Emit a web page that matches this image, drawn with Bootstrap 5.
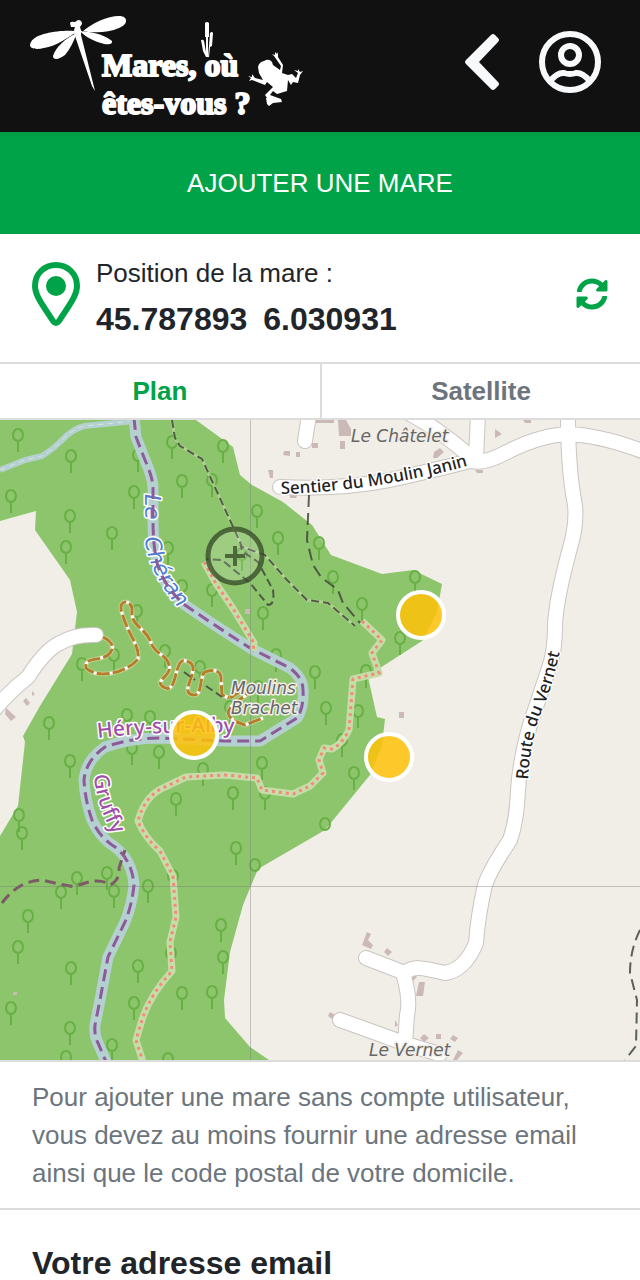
<!DOCTYPE html>
<html lang="fr">
<head>
<meta charset="utf-8">
<meta name="viewport" content="width=device-width, initial-scale=1">
<title>Mares, où êtes-vous ?</title>
<link href="https://cdn.jsdelivr.net/npm/bootstrap@5.3.0/dist/css/bootstrap.min.css" rel="stylesheet">
<style>
  :root { --green: #00a348; --line: #dcdcdc; }
  body { font-family: "Liberation Sans", Arial, sans-serif; font-size: 26px; line-height: 38px; color: #212529; }
  .top-bar { background: #111; height: 132px; padding: 0 38px 0 28px; position: relative; z-index: 1; }
  .brand-art { width: 280px; height: 112px; }
  .brand-art text { font: bold 32px "Liberation Serif", serif; fill: #fff; stroke: #fff; stroke-width: 2; stroke-linejoin: round; }
  .icon-btn { background: none; border: 0; padding: 0; display: flex; color: #f8f9fa; }
  .page-title { background: var(--green); color: #fff; font-size: 26px; line-height: 38px; padding: 32px; margin: 0; font-weight: 400; }
  .position-bar { padding: 20px 32px 16px; border-bottom: 2px solid var(--line); }
  .position-bar > svg, .position-bar > button { margin-bottom: 12px; }
  .coords { font-size: 32px; line-height: 54px; font-weight: 700; }
  .layer-tab { background: #fff; border: 0; border-bottom: 2px solid var(--line); color: #6c757d; font-weight: 700; line-height: 38px; padding: 8px; height: 56px; }
  .layer-tab.active { color: var(--green); }
  .layer-tab + .layer-tab { border-left: 2px solid var(--line); }
  .map-view { display: block; width: 100%; height: 640px; background: #f1eee8; }
  .note { padding: 16px 32px; color: #6c757d; border-top: 2px solid var(--line); border-bottom: 2px solid var(--line); margin: 0; }
  .field-title { font-size: 32px; line-height: 38px; font-weight: 700; padding: 34px 32px 0; margin: 0; }
  .lbl { font-family: "Noto Sans", sans-serif; font-size: 17px; stroke: #fff; stroke-width: 3; stroke-linejoin: round; paint-order: stroke; }
  .place { font-family: "DejaVu Sans", sans-serif; fill: #666; font-style: italic; stroke: #f1eee8; }
  .street { fill: #222; font-weight: 500; }
  .town { fill: #a04fa8; font-size: 21px; font-weight: 500; }
  .water { font-family: "DejaVu Sans", sans-serif; fill: #4f7fd0; font-size: 22px; font-style: italic; }
</style>
</head>
<body>
<header class="top-bar d-flex align-items-center justify-content-between shadow-sm">
  <a href="#" class="d-flex" aria-label="Mares, où êtes-vous ?">
    <svg class="brand-art" viewBox="28 10 280 112" fill="#fff">
      <path d="M81 33C91 23 108 16 119 16C129 16 128 25 119 28C108 33 94 33 81 31Z"/>
      <path d="M74 31C60 30 36 33 31 42C27 49 36 50 44 48C56 46 66 39 75 33Z"/>
      <path d="M82 32C92 31 106 36 112 41C113 45 106 45 101 43C94 41 86 37 82 33Z"/>
      <path d="M75 34C66 38 55 48 53 56C53 61 60 59 65 55C70 49 74 41 76 35Z"/>
      <path d="M70 23Q71 21 75 22L78 20Q82 20 82 24L80 27Q82 31 81 35L95 91L92 86L75 36Q73 31 75 27L71 27Z"/>
      <path d="M205 23Q207 21 209 23V37H208V57H206V37H205ZM210 33Q212 31 213 33L212 46L210 47L209 57L208 57L209 46ZM201 40Q203 39 204 41L206 52V57L203 51Z"/>
      <text x="102" y="76">Mares, où</text>
      <text x="102" y="114">êtes-vous ?</text>
      <path d="M258 67Q259 62 264 61Q269 58 272 62L273 65L280 70L281 66L274 56L272 54L275 55L275 52L277 54L278 52L278 57L283 65L282 73L288 75L292 74L296 78L298 73L294 70L298 71L298 69L300 72L303 71L300 75L298 83L293 82L291 85L288 80L287 91L277 94L273 91L270 95L281 99L282 102L273 103L269 106L267 104L266 98L267 98L265 95L273 87L267 82L265 85L252 80L249 81L251 78L248 76L252 77L252 74L255 78L263 80L259 73Z"/>
    </svg>
  </a>
  <nav class="d-flex align-items-center" aria-label="Compte" style="gap:38px;margin-top:-8px">
    <button class="icon-btn" type="button" aria-label="Retour">
      <svg width="38" height="64" viewBox="462 30 38 64" fill="currentColor"><path d="M491 35Q493 33 495 35L498 38Q500 40 498 42L479 62L498 82Q500 84 498 86L495 89Q493 91 491 89L466 64Q464 62 466 60Z"/></svg>
    </button>
    <button class="icon-btn" type="button" aria-label="Mon compte">
      <svg width="64" height="64" viewBox="538 30 64 64" fill="none" stroke="currentColor" stroke-width="6"><circle cx="570" cy="62" r="28"/><circle cx="570" cy="55" r="9"/><path d="M550 81Q558 72 564 73Q570 75 576 73Q582 72 590 81"/></svg>
    </button>
  </nav>
</header>

<main>
  <h1 class="page-title text-center">AJOUTER UNE MARE</h1>

  <section class="position-bar d-flex align-items-center gap-3">
    <svg class="flex-shrink-0" width="48" height="64" viewBox="0 0 48 64" fill="none"><path d="M24 3C12 3 3 12 3 24C3 34 12 45 21 59Q24 63 27 59C36 45 45 34 45 24C45 12 36 3 24 3Z" stroke="#00a348" stroke-width="6"/><circle cx="24" cy="24" r="10" fill="#00a348"/></svg>
    <div class="flex-grow-1">
      <div>Position de la mare :</div>
      <div class="coords d-flex"><span>45.787893</span><span class="ms-3">6.030931</span></div>
    </div>
    <button class="icon-btn" type="button" aria-label="Actualiser la position">
      <svg width="32" height="32" viewBox="0 0 512 512" fill="#00a348"><path d="M370.72 133.28C339.458 104.008 298.888 87.962 255.848 88c-77.458.068-144.328 53.178-162.791 126.85-1.344 5.363-6.122 9.15-11.651 9.15H24.103c-7.498 0-13.194-6.807-11.807-14.176C33.933 94.924 134.813 8 256 8c66.448 0 126.791 26.136 171.315 68.685L463.03 40.97C478.149 25.851 504 36.559 504 57.941V192c0 13.255-10.745 24-24 24H345.941c-21.382 0-32.09-25.851-16.971-40.971l41.75-41.749zM32 296h134.059c21.382 0 32.09 25.851 16.971 40.971l-41.75 41.75c31.262 29.273 71.835 45.319 114.876 45.28 77.418-.07 144.315-53.144 162.787-126.849 1.344-5.363 6.122-9.15 11.651-9.15h57.304c7.498 0 13.194 6.807 11.807 14.176C478.067 417.076 377.187 504 256 504c-66.448 0-126.791-26.136-171.315-68.685L48.97 471.03C33.851 486.149 8 475.441 8 454.059V320c0-13.255 10.745-24 24-24z"/></svg>
    </button>
  </section>

  <div class="row g-0" role="group" aria-label="Fond de carte">
    <button class="layer-tab active col-6" type="button">Plan</button>
    <button class="layer-tab col-6" type="button">Satellite</button>
  </div>

  <svg class="map-view" viewBox="0 420 640 640" preserveAspectRatio="xMidYMid slice" fill="none" role="img" aria-label="Carte des mares">
    <defs>
      <g id="tree" stroke="#68b045" stroke-width="2"><ellipse rx="5" ry="6"/><path d="M0 6V17"/></g>
      <path id="river" d="M134 418L136 437L145 460Q153 478 153 488L153 520Q153 545 157 563Q164 587 185 605L210 622L250 648L290 668Q303 678 303 690Q304 708 297 718L260 741L225 741L160 738Q130 738 105 747Q86 760 84 780Q85 800 92 820Q100 838 115 847Q132 860 134 885Q132 905 125 922L108 957L100 1000L95 1025Q94 1035 98 1043L107 1064"/>
      <path id="roads" d="M-6 710Q10 691 28 677Q45 650 60 643Q75 634 96 635M280 487Q340 490 390 480Q435 470 470 461Q485 464 505 453Q540 435 568 434Q600 435 645 452M309 415L305 441M390 405Q430 420 474 460M478 415L476 458M568 415Q568 470 575 505Q577 525 570 548Q556 600 555 625Q555 650 550 665L530 725Q520 760 518 790Q517 820 510 840Q490 870 485 885Q478 915 476 943Q465 970 445 973C420 967 413 966 405 973L366 958M403 973Q411 1000 407 1015L405 1044M340 1020L390 1038Q410 1046 440 1054"/>
      <path id="trails" d="M204 562L215 582L234 610L254 643L253 651M362 621L382 640L372 653L379 673L353 679L349 730Q342 744 332 749L324 748L319 760L323 773L310 786L293 794L262 790L257 778L225 775L186 777L165 787Q145 795 138 821Q145 838 160 851L173 876L176 917L170 942L172 971Q150 995 142 1020L136 1040L143 1062"/>
      <path id="tracks" d="M103 637Q117 644 110 653C102 663 84 655 86 668C98 680 128 672 138 659C140 645 129 637 122 613C117 598 132 600 132 609C131 627 141 624 150 640C154 655 167 654 169 665C173 675 155 680 162 686C179 699 173 655 186 661C204 665 181 688 190 694C204 700 198 678 205 672Q222 667 221 680L222 695L229 698M230 698Q258 680 245 696C218 712 228 720 245 725L263 718"/>
      <path id="sentier" d="M281 494Q375 491 467 466"/>
      <path id="vernet" d="M528 780Q531 735 543 708Q553 685 560 650"/>
      <path id="hery" d="M98 738Q158 731 232 733"/>
      <path id="gruffy" d="M94 775Q96 808 120 846"/>
      <path id="lech" d="M145 494V540Q150 580 190 620L215 637"/>
    </defs>
    <path fill="#8dc56c" d="M0 420H196L233 447L240 475L252 485L283 502L312 525L331 555L382 574L413 570L442 584L437 612L422 641L380 668L368 677L377 717L385 719L382 745L370 775L325 830L258 869L243 905L230 952L224 1000L225 1018L250 1047L269 1060H0V836L18 806L25 742L23 736L40 706L72 654L77 612L70 580L35 530L36 511L0 521Z"/>
    <path fill="#cbb9b8" d="M316 420h18v3h-18zM338 420h8l5 9v7h-12zM340 441h5v8h-5zM312 443h6v5h-6zM296 452h4v5h-4zM284 451h6v5l-7-1zM268 470h5v8h-3zM290 493h8l-2 5h-6zM434 452l6-4 4 4-7 6h-4zM495 429l7 5-7 4zM523 420h8v3h-6zM475 470h8v3h-6zM6 708l10 9-5 4-6-7zM26 698l4 5-3 3-4-5zM32 691l3 3-3 2zM367 932l4 2-3 6 5 5-2 4-9-4zM387 948l5 4-4 4-4-4zM412 973l5 4-4 4-4-4zM419 982h6l-2 14h-7zM424 1034l5 4-5 4-4-4zM436 1034h5v5h-5zM453 1035l5 3-3 4-5-3zM458 1050l5 3-6 7h-4zM330 1012l5 3-3 4-4-3zM399 712h5v6h-5zM245 609h5v5h-5zM395 1020l3 5-3 2zM13 992h4v3h-4z"/>
    <g>
      <use href="#tree" x="18" y="435"/><use href="#tree" x="71" y="456"/><use href="#tree" x="11" y="496"/><use href="#tree" x="70" y="516"/><use href="#tree" x="66" y="547"/><use href="#tree" x="112" y="533"/><use href="#tree" x="134" y="492"/><use href="#tree" x="138" y="455"/><use href="#tree" x="172" y="442"/><use href="#tree" x="223" y="446"/><use href="#tree" x="182" y="481"/><use href="#tree" x="212" y="480"/><use href="#tree" x="257" y="511"/><use href="#tree" x="168" y="548"/><use href="#tree" x="182" y="586"/><use href="#tree" x="212" y="590"/><use href="#tree" x="137" y="611"/><use href="#tree" x="242" y="554"/>
      <use href="#tree" x="278" y="538"/><use href="#tree" x="319" y="543"/><use href="#tree" x="333" y="577"/><use href="#tree" x="362" y="604"/><use href="#tree" x="415" y="577"/><use href="#tree" x="263" y="613"/><use href="#tree" x="400" y="638"/><use href="#tree" x="82" y="664"/><use href="#tree" x="114" y="655"/><use href="#tree" x="165" y="651"/><use href="#tree" x="200" y="667"/><use href="#tree" x="49" y="723"/><use href="#tree" x="70" y="761"/><use href="#tree" x="19" y="815"/><use href="#tree" x="22" y="833"/><use href="#tree" x="132" y="748"/><use href="#tree" x="159" y="752"/><use href="#tree" x="203" y="769"/><use href="#tree" x="176" y="799"/><use href="#tree" x="233" y="793"/><use href="#tree" x="127" y="715"/><use href="#tree" x="150" y="717"/>
      <use href="#tree" x="276" y="655"/><use href="#tree" x="315" y="672"/><use href="#tree" x="326" y="708"/><use href="#tree" x="358" y="711"/><use href="#tree" x="366" y="671"/><use href="#tree" x="342" y="740"/><use href="#tree" x="354" y="773"/><use href="#tree" x="262" y="763"/><use href="#tree" x="265" y="793"/><use href="#tree" x="258" y="687"/><use href="#tree" x="230" y="707"/>
      <ellipse cx="325" cy="824" rx="5" ry="6" stroke="#68b045" stroke-width="2"/><ellipse cx="255" cy="865" rx="5" ry="6" stroke="#68b045" stroke-width="2"/>
      <use href="#tree" x="236" y="848"/><use href="#tree" x="77" y="878"/><use href="#tree" x="107" y="873"/><use href="#tree" x="61" y="892"/><use href="#tree" x="114" y="891"/><use href="#tree" x="148" y="886"/><use href="#tree" x="173" y="876"/><use href="#tree" x="28" y="916"/><use href="#tree" x="18" y="947"/><use href="#tree" x="71" y="968"/><use href="#tree" x="138" y="966"/><use href="#tree" x="171" y="953"/><use href="#tree" x="221" y="925"/><use href="#tree" x="223" y="957"/><use href="#tree" x="182" y="993"/><use href="#tree" x="212" y="992"/><use href="#tree" x="11" y="1008"/><use href="#tree" x="134" y="1003"/><use href="#tree" x="70" y="1028"/><use href="#tree" x="112" y="1045"/><use href="#tree" x="66" y="1057"/><use href="#tree" x="168" y="1059"/>
    </g>
    <path d="M0 470L25 460L42 456Q52 450 60 442Q73 428 85 426L134 421" stroke="#b5d0d0" stroke-width="6"/>
    <path d="M0 470L25 460L42 456Q52 450 60 442Q73 428 85 426L134 421" stroke="#d5e6dd" stroke-width="1" stroke-dasharray="6 4"/>
    <use href="#river" stroke="#b5d0d0" stroke-width="11" stroke-linejoin="round"/>
    <g class="lbl">
      <text class="water"><textPath href="#lech">Le</textPath></text>
      <text class="water"><textPath href="#lech" startOffset="44">Chéran</textPath></text>
    </g>
    <use href="#river" stroke="#8d5b98" stroke-width="3" stroke-dasharray="12 6"/>
    <path d="M2 903Q18 881 42 880Q58 884 75 887Q98 876 110 885Q120 880 119 868L125 850" stroke="#7c5a66" stroke-width="3" stroke-dasharray="11 6"/>
    <use href="#roads" stroke="#c9c5c2" stroke-width="16" stroke-linecap="round" stroke-linejoin="round"/>
    <use href="#roads" stroke="#fff" stroke-width="14" stroke-linecap="round" stroke-linejoin="round"/>
    <use href="#trails" stroke="#c7dda9" stroke-width="7" stroke-linejoin="round"/>
    <use href="#trails" stroke="#f58b76" stroke-width="3" stroke-dasharray="3 4"/>
    <use href="#tracks" stroke="#d6d5a0" stroke-width="5" stroke-opacity=".5"/>
    <use href="#tracks" stroke="#fff" stroke-width="3"/>
    <use href="#tracks" stroke="#b47d28" stroke-width="3" stroke-dasharray="13 3"/>
    <g stroke="#c5dba6" stroke-width="3" stroke-opacity=".6">
      <path d="M172 420L175 438L180 446L202 459L240 542L242 547L265 555L287 580L307 600L328 603L355 626"/>
    </g>
    <g stroke="#41483b" stroke-width="2" stroke-dasharray="8 4" stroke-opacity=".85">
      <path d="M172 420L175 438L180 446L202 459L240 542L242 547L265 555L287 580L307 600L328 603L355 626M240 542L242 551L258 562L273 590Q275 605 268 605L250 583L222 560L206 559"/>
      <path d="M309 495L307 540L313 565L321 577L338 590L343 603L360 623" stroke-dasharray="12 6"/>
      <path d="M184 672L195 680M206 686L222 697"/>
      <path d="M640 930Q630 950 630 973L637 1000L636 1046L625 1060" stroke-dasharray="11 6"/>
    </g>
    <path d="M250.500 420V1060M0 886.500H640" stroke="#777" stroke-opacity=".4"/>
    <g class="lbl">
      <text class="place" x="351" y="442">Le Châtelet</text>
      <text class="place" x="231" y="694">Moulins</text>
      <text class="place" x="231" y="714">Brachet</text>
      <text class="place" x="369" y="1056">Le Vernet</text>
      <text class="street"><textPath href="#sentier">Sentier du Moulin Janin</textPath></text>
      <text class="street"><textPath href="#vernet">Route du Vernet</textPath></text>
      <text class="town"><textPath href="#hery">Héry-sur-Alby</textPath></text>
      <text class="town"><textPath href="#gruffy">Gruffy</textPath></text>
    </g>
    <g fill="#ffc107" fill-opacity=".85" stroke="#fff" stroke-width="4">
      <circle cx="421" cy="615" r="23"/><circle cx="194" cy="735" r="23"/><circle cx="389" cy="757" r="23"/>
    </g>
    <g stroke="#334525" stroke-opacity=".75">
      <circle cx="235" cy="556" r="27" stroke-width="5" fill="#fff" fill-opacity=".15"/>
      <path d="M225 556H245M235 546V566" stroke-width="4"/>
    </g>
  </svg>

  <p class="note">Pour ajouter une mare sans compte utilisateur, vous devez au moins fournir une adresse email ainsi que le code postal de votre domicile.</p>
  <h2 class="field-title">Votre adresse email</h2>
</main>
<script src="https://cdn.jsdelivr.net/npm/bootstrap@5.3.0/dist/js/bootstrap.bundle.min.js"></script>
</body>
</html>
